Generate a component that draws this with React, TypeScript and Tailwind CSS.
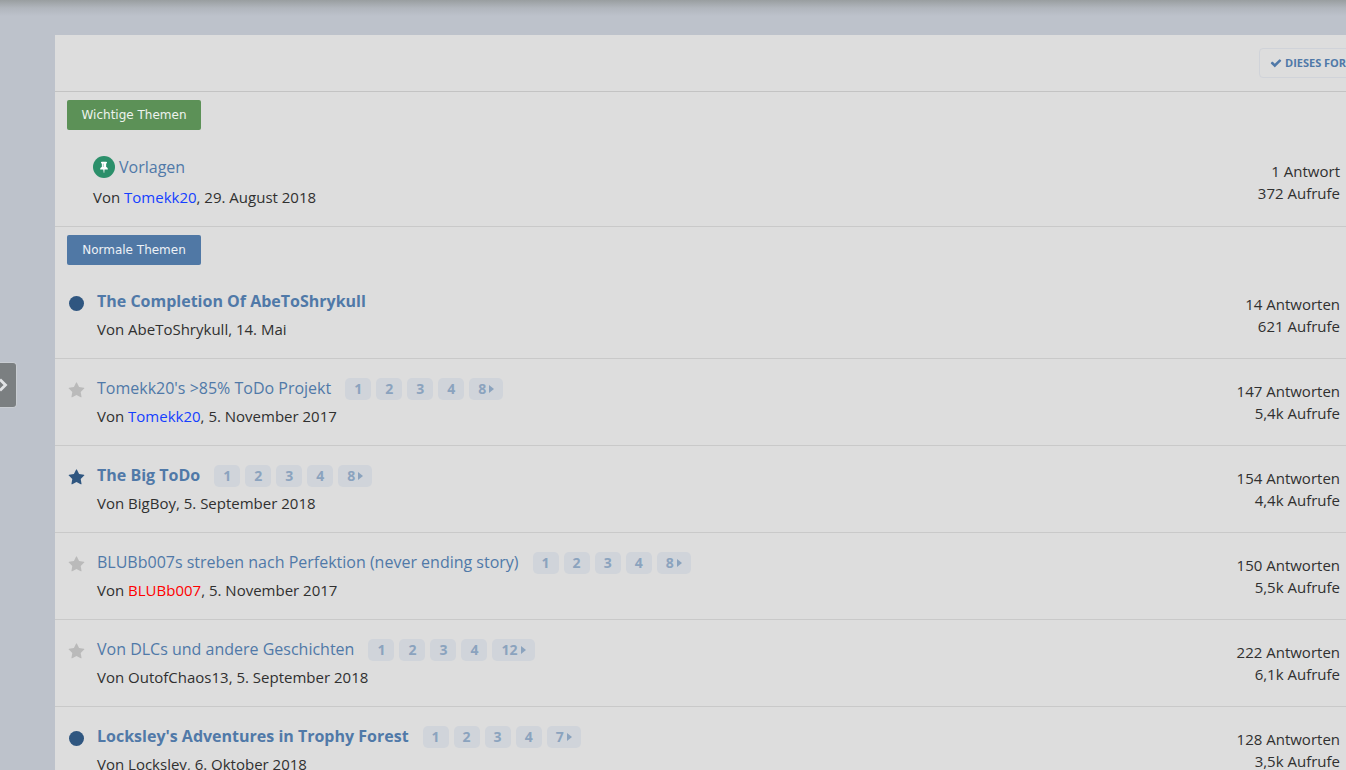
import type { FC } from "react";

type Marker = "dot" | "star" | "starUnread";

interface Topic {
  title: string;
  author: string;
  authorColor?: string;
  date: string;
  marker: Marker;
  unread?: boolean;
  lastPages?: string;
  replies: string;
  views: string;
}

const topics: Topic[] = [
  {
    title: "The Completion Of AbeToShrykull",
    author: "AbeToShrykull",
    date: "14. Mai",
    marker: "dot",
    unread: true,
    replies: "14 Antworten",
    views: "621 Aufrufe",
  },
  {
    title: "Tomekk20's >85% ToDo Projekt",
    author: "Tomekk20",
    authorColor: "text-[#1440ff]",
    date: "5. November 2017",
    marker: "star",
    lastPages: "8",
    replies: "147 Antworten",
    views: "5,4k Aufrufe",
  },
  {
    title: "The Big ToDo",
    author: "BigBoy",
    date: "5. September 2018",
    marker: "starUnread",
    unread: true,
    lastPages: "8",
    replies: "154 Antworten",
    views: "4,4k Aufrufe",
  },
  {
    title: "BLUBb007s streben nach Perfektion (never ending story)",
    author: "BLUBb007",
    authorColor: "text-[#ff0000]",
    date: "5. November 2017",
    marker: "star",
    lastPages: "8",
    replies: "150 Antworten",
    views: "5,5k Aufrufe",
  },
  {
    title: "Von DLCs und andere Geschichten",
    author: "OutofChaos13",
    date: "5. September 2018",
    marker: "star",
    lastPages: "12",
    replies: "222 Antworten",
    views: "6,1k Aufrufe",
  },
  {
    title: "Locksley's Adventures in Trophy Forest",
    author: "Locksley",
    date: "6. Oktober 2018",
    marker: "dot",
    unread: true,
    lastPages: "7",
    replies: "128 Antworten",
    views: "3,5k Aufrufe",
  },
];

const StarIcon: FC<{ className: string }> = ({ className }) => (
  <svg viewBox="0 0 1792 1792" className={className} fill="currentColor">
    <path d="M1728 647q0 22-26 48l-363 354 86 500q1 7 1 20 0 21-10.5 35.5t-30.5 14.5q-19 0-40-12l-449-236-449 236q-22 12-40 12-21 0-31.5-14.5t-10.5-35.5q0-6 2-20l86-500-364-354q-25-27-25-48 0-37 56-46l502-73 225-455q19-41 49-41t49 41l225 455 502 73q56 9 56 46z" />
  </svg>
);

const PinIcon: FC = () => (
  <svg viewBox="0 0 1792 1792" className="size-3" fill="currentColor">
    <path d="M800 864v-448q0-14-9-23t-23-9-23 9-9 23v448q0 14 9 23t23 9 23-9 9-23zm672 352q0 26-19 45t-45 19h-429l-51 483q-2 12-10.5 20.5t-20.5 8.5h-1q-27 0-32-27l-76-485h-404q-26 0-45-19t-19-45q0-123 78.5-221.5t177.5-98.5v-512q-52 0-90-38t-38-90 38-90 90-38h640q52 0 90 38t38 90-38 90-90 38v512q99 0 177.5 98.5t78.5 221.5z" />
  </svg>
);

const CheckIcon: FC = () => (
  <svg viewBox="0 0 1792 1792" className="size-3 shrink-0" fill="currentColor">
    <path d="M1671 566q0 40-28 68l-724 724-136 136q-28 28-68 28t-68-28l-136-136-362-362q-28-28-28-68t28-68l136-136q28-28 68-28t68 28l294 295 656-657q28-28 68-28t68 28l136 136q28 28 28 68z" />
  </svg>
);

const TopicMarker: FC<{ marker: Marker }> = ({ marker }) => {
  if (marker === "dot") {
    return <span className="size-[15px] rounded-full bg-[#2f5680]" />;
  }
  return marker === "star" ? (
    <StarIcon className="size-[17px] text-[#bababa]" />
  ) : (
    <StarIcon className="size-[17px] text-[#2f5680]" />
  );
};

const Pages: FC<{ last: string }> = ({ last }) => (
  <ul className="ml-3.5 flex gap-[5px] pt-px text-sm leading-[22px] font-bold text-[#8ba3be]">
    {["1", "2", "3", "4"].map((page) => (
      <li key={page}>
        <a href="#" className="block rounded-[5px] bg-[#d0d4da] px-[9px] leading-[22px]">
          {page}
        </a>
      </li>
    ))}
    <li>
      <a
        href="#"
        className="flex items-center gap-[3px] rounded-[5px] bg-[#d0d4da] px-[9px] leading-[22px]"
      >
        {last}
        <svg viewBox="0 0 5 8" className="h-2 w-[5px]" fill="currentColor">
          <path d="M0 0v8L5 4z" />
        </svg>
      </a>
    </li>
  </ul>
);

const Stats: FC<{ replies: string; views: string }> = ({ replies, views }) => (
  <ul className="ml-auto pt-1 text-right whitespace-nowrap">
    <li>{replies}</li>
    <li>{views}</li>
  </ul>
);

const TopicRow: FC<{ topic: Topic }> = ({ topic }) => (
  <li className="flex border-b border-[#c9c9c9] pt-[17px] pr-1.5 pb-[18px] pl-[13px]">
    <div className="mr-3 flex h-7 w-[17px] shrink-0 items-center justify-center">
      <TopicMarker marker={topic.marker} />
    </div>
    <div className="flex flex-col gap-[5px]">
      <div className="flex h-6 items-center">
        <h4
          className={
            topic.unread
              ? "text-base font-bold text-[#5079a8]"
              : "text-base text-[#5079a8]"
          }
        >
          <a href="#">{topic.title}</a>
        </h4>
        {topic.lastPages && <Pages last={topic.lastPages} />}
      </div>
      <p>
        Von{" "}
        <a href="#" className={topic.authorColor}>
          {topic.author}
        </a>
        , {topic.date}
      </p>
    </div>
    <Stats replies={topic.replies} views={topic.views} />
  </li>
);

const App: FC = () => (
  <div className="relative h-screen overflow-hidden bg-[#bdc2cb] pt-[35px] pl-[55px] font-['Open_Sans',sans-serif] text-[15px] leading-[22px] text-[#303030]">
    <div className="absolute inset-x-0 top-0 h-4 bg-linear-to-b from-[#999ea0] via-[#b1b6bd] to-[#bdc2cb]" />

    <main className="bg-[#dddddd]">
      <div className="flex h-[57px] items-center justify-end overflow-hidden border-b border-[#c3c3c3]">
        <div className="w-[87px] shrink-0">
          <button
            type="button"
            className="flex h-[30px] items-center gap-[3px] rounded border border-[#d0d3d9] px-2.5 text-[11px] font-bold whitespace-nowrap text-[#5079a8]"
          >
            <CheckIcon />
            DIESES FORUM
          </button>
        </div>
      </div>

      <section>
        <h3 className="ml-3 pt-2">
          <span className="flex h-[30px] w-[134px] items-center justify-center rounded-xs bg-[#5c9157] font-['DejaVu_Sans',sans-serif] text-xs text-[#eef3ee]">
            Wichtige Themen
          </span>
        </h3>
        <div className="flex border-b border-[#c9c9c9] pt-[26px] pr-1.5 pb-[18px] pl-[38px]">
          <div className="flex flex-col gap-2">
            <div className="flex h-[22px] items-center gap-1">
              <span className="flex size-[22px] items-center justify-center rounded-full bg-[#2b8f6a] text-white">
                <PinIcon />
              </span>
              <h4 className="text-base text-[#5079a8]">
                <a href="#">Vorlagen</a>
              </h4>
            </div>
            <p>
              Von{" "}
              <a href="#" className="text-[#1440ff]">
                Tomekk20
              </a>
              , 29. August 2018
            </p>
          </div>
          <Stats replies="1 Antwort" views="372 Aufrufe" />
        </div>
      </section>

      <section>
        <h3 className="ml-3 pt-2 pb-[7px]">
          <span className="flex h-[30px] w-[134px] items-center justify-center rounded-xs bg-[#5078a5] font-['DejaVu_Sans',sans-serif] text-xs text-[#edf1f6]">
            Normale Themen
          </span>
        </h3>
        <ul>
          {topics.map((topic) => (
            <TopicRow key={topic.title} topic={topic} />
          ))}
        </ul>
      </section>
    </main>

    <button
      type="button"
      aria-label="Seitenleiste"
      className="fixed top-1/2 left-0 flex h-[46px] w-[17px] -translate-y-1/2 items-center rounded-r border-y border-r border-[#c9cdd2] bg-[#7b7f81] text-[#e2e4e6]"
    >
      <svg viewBox="0 0 8 14" className="h-3.5 w-2" fill="none" stroke="currentColor" strokeWidth="2.8">
        <path d="M0 1.5L5.5 7L0 12.5" />
      </svg>
    </button>
  </div>
);

export default App;
